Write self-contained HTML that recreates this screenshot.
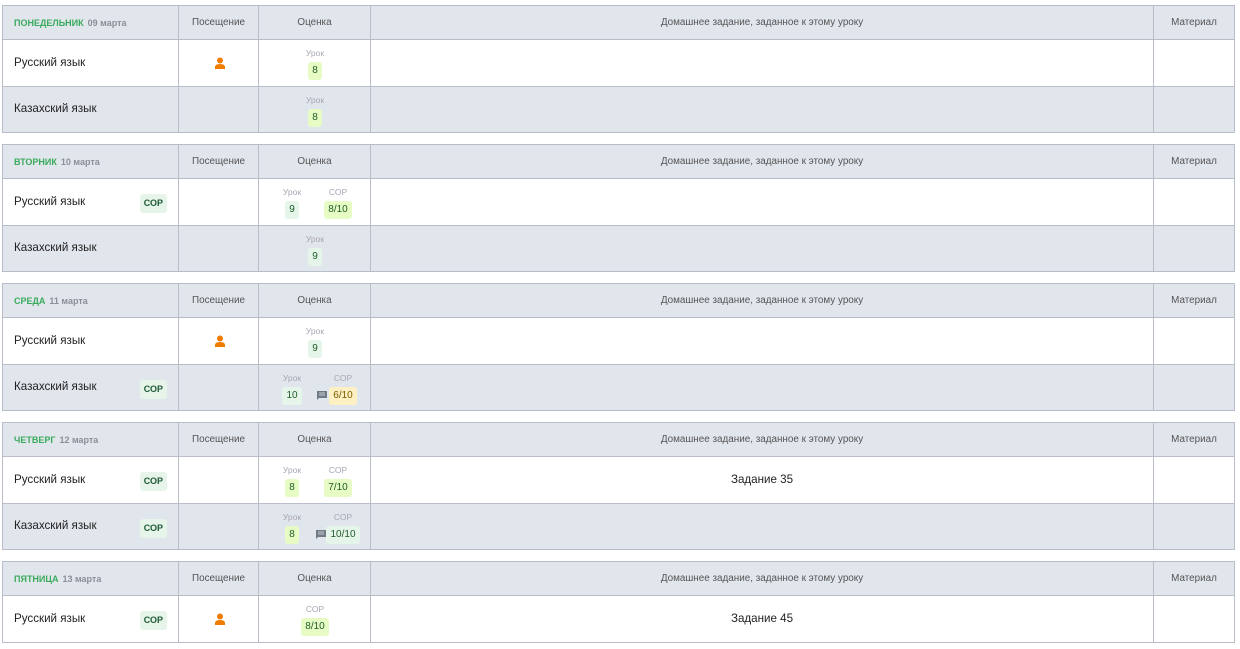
<!DOCTYPE html>
<html><head><meta charset="utf-8">
<style>
body{margin:0;background:#fff;font-family:"Liberation Sans",sans-serif;}
table{position:absolute;left:2px;width:1232px;border-collapse:collapse;table-layout:fixed;}
td{border:1px solid #b9bdc9;padding:0;position:relative;}
tr.h{height:34px;}
tr.h td{line-height:12px;background:#e1e5ec;font-size:9.9px;color:#555;text-align:center;vertical-align:middle;}
tr.h td.d{text-align:left;padding-left:11px;font-weight:bold;color:#3aab5c;font-size:9px;}
tr.h td.d span{color:#8a8f99;font-weight:bold;margin-left:4px;}
tr.r{height:46.5px;}
tr.r td{line-height:14px;background:#fff;}
tr.g td{background:#e1e5ec;}
td.s{font-size:11.6px;color:#222;padding-left:11px;}
.sor{position:absolute;right:11px;top:15px;background:#e6f4ea;color:#1e5a35;font-size:9px;line-height:11px;font-weight:bold;padding:4px 4px;border-radius:3px;}
.gr{position:absolute;top:0;left:0;right:0;bottom:0;}
.it{position:absolute;top:7px;text-align:center;width:40px;margin-left:-20px;line-height:12px;}
.lb{font-size:8.5px;color:#aaa6b4;height:12px;}
.b{display:inline-block;margin-top:3px;font-size:10px;padding:3px 4px;border-radius:3px;color:#1f5a28;}
.g8{background:#e6fcc4;}
.g9{background:#e5f5ea;}
.y{background:#fdf0c2;color:#7a5a00;}
.cm{position:absolute;top:26px;width:10px;height:9px;}
.hw{font-size:11.6px;color:#222;text-align:center;}
.p{position:absolute;left:35px;top:17px;width:12px;height:13px;}
</style></head><body>

<table style="top:5px">
<colgroup><col style="width:176px"><col style="width:80px"><col style="width:112px"><col style="width:783px"><col style="width:81px"></colgroup>
<tr class="h"><td class="d">ПОНЕДЕЛЬНИК<span>09 марта</span></td><td>Посещение</td><td>Оценка</td><td>Домашнее задание, заданное к этому уроку</td><td>Материал</td></tr>
<tr class="r"><td class="s">Русский язык</td><td><svg class="p" viewBox="0 0 12 13"><circle cx="6" cy="3.5" r="3" fill="#f07c00"/><path d="M1 12v-2q0-3 5-3t5 3v2z" fill="#f07c00"/></svg></td><td><div class="gr"><div class="it" style="left:56px"><div class="lb">Урок</div><span class="b g8">8</span></div></div></td><td></td><td></td></tr>
<tr class="r g"><td class="s">Казахский язык</td><td></td><td><div class="gr"><div class="it" style="left:56px"><div class="lb">Урок</div><span class="b g8">8</span></div></div></td><td></td><td></td></tr>
</table>

<table style="top:144px">
<colgroup><col style="width:176px"><col style="width:80px"><col style="width:112px"><col style="width:783px"><col style="width:81px"></colgroup>
<tr class="h"><td class="d">ВТОРНИК<span>10 марта</span></td><td>Посещение</td><td>Оценка</td><td>Домашнее задание, заданное к этому уроку</td><td>Материал</td></tr>
<tr class="r"><td class="s">Русский язык<span class="sor">СОР</span></td><td></td><td><div class="gr"><div class="it" style="left:33px"><div class="lb">Урок</div><span class="b g9">9</span></div><div class="it" style="left:79px"><div class="lb">СОР</div><span class="b g8">8/10</span></div></div></td><td></td><td></td></tr>
<tr class="r g"><td class="s">Казахский язык</td><td></td><td><div class="gr"><div class="it" style="left:56px"><div class="lb">Урок</div><span class="b g9">9</span></div></div></td><td></td><td></td></tr>
</table>

<table style="top:283px">
<colgroup><col style="width:176px"><col style="width:80px"><col style="width:112px"><col style="width:783px"><col style="width:81px"></colgroup>
<tr class="h"><td class="d">СРЕДА<span>11 марта</span></td><td>Посещение</td><td>Оценка</td><td>Домашнее задание, заданное к этому уроку</td><td>Материал</td></tr>
<tr class="r"><td class="s">Русский язык</td><td><svg class="p" viewBox="0 0 12 13"><circle cx="6" cy="3.5" r="3" fill="#f07c00"/><path d="M1 12v-2q0-3 5-3t5 3v2z" fill="#f07c00"/></svg></td><td><div class="gr"><div class="it" style="left:56px"><div class="lb">Урок</div><span class="b g9">9</span></div></div></td><td></td><td></td></tr>
<tr class="r g"><td class="s">Казахский язык<span class="sor">СОР</span></td><td></td><td><div class="gr"><div class="it" style="left:33px"><div class="lb">Урок</div><span class="b g9">10</span></div><div class="it" style="left:84px"><div class="lb">СОР</div><span class="b y">6/10</span></div><svg class="cm" style="left:58px" viewBox="0 0 10 9"><path d="M0 0h10v7H2L0 9z" fill="#707a86"/><path d="M2 2h6M2 4h6" stroke="#e1e5ec" stroke-width="0.8"/></svg></div></td><td></td><td></td></tr>
</table>

<table style="top:422px">
<colgroup><col style="width:176px"><col style="width:80px"><col style="width:112px"><col style="width:783px"><col style="width:81px"></colgroup>
<tr class="h"><td class="d">ЧЕТВЕРГ<span>12 марта</span></td><td>Посещение</td><td>Оценка</td><td>Домашнее задание, заданное к этому уроку</td><td>Материал</td></tr>
<tr class="r"><td class="s">Русский язык<span class="sor">СОР</span></td><td></td><td><div class="gr"><div class="it" style="left:33px"><div class="lb">Урок</div><span class="b g8">8</span></div><div class="it" style="left:79px"><div class="lb">СОР</div><span class="b g8">7/10</span></div></div></td><td class="hw">Задание 35</td><td></td></tr>
<tr class="r g"><td class="s">Казахский язык<span class="sor">СОР</span></td><td></td><td><div class="gr"><div class="it" style="left:33px"><div class="lb">Урок</div><span class="b g8">8</span></div><div class="it" style="left:84px"><div class="lb">СОР</div><span class="b g9">10/10</span></div><svg class="cm" style="left:57px" viewBox="0 0 10 9"><path d="M0 0h10v7H2L0 9z" fill="#707a86"/><path d="M2 2h6M2 4h6" stroke="#e1e5ec" stroke-width="0.8"/></svg></div></td><td></td><td></td></tr>
</table>

<table style="top:561px">
<colgroup><col style="width:176px"><col style="width:80px"><col style="width:112px"><col style="width:783px"><col style="width:81px"></colgroup>
<tr class="h"><td class="d">ПЯТНИЦА<span>13 марта</span></td><td>Посещение</td><td>Оценка</td><td>Домашнее задание, заданное к этому уроку</td><td>Материал</td></tr>
<tr class="r"><td class="s">Русский язык<span class="sor">СОР</span></td><td><svg class="p" viewBox="0 0 12 13"><circle cx="6" cy="3.5" r="3" fill="#f07c00"/><path d="M1 12v-2q0-3 5-3t5 3v2z" fill="#f07c00"/></svg></td><td><div class="gr"><div class="it" style="left:56px"><div class="lb">СОР</div><span class="b g8">8/10</span></div></div></td><td class="hw">Задание 45</td><td></td></tr>
</table>

</body></html>
